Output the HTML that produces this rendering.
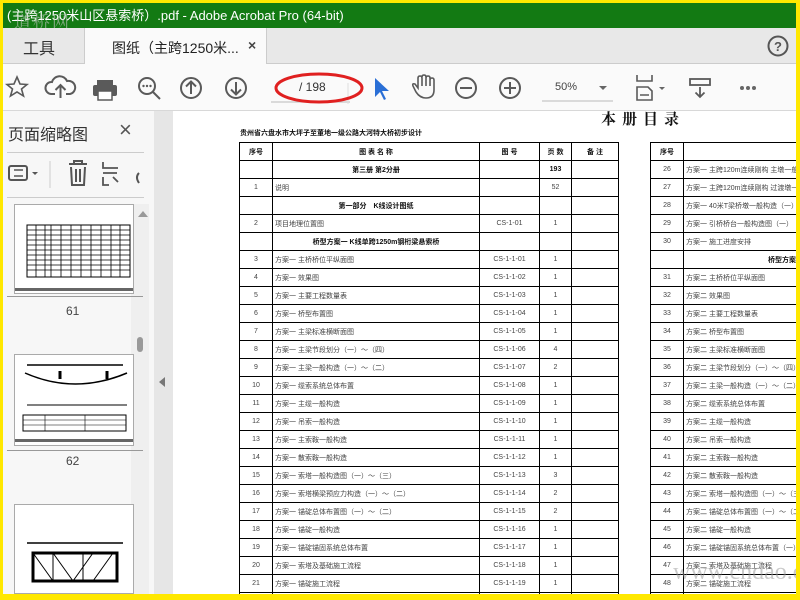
<!DOCTYPE html>
<html><head><meta charset="utf-8"><style>
*{margin:0;padding:0;box-sizing:border-box}
body{width:800px;height:600px;overflow:hidden;background:#ffe800;position:relative;font-family:"Liberation Sans","Noto Sans CJK SC",sans-serif}
.abs{position:absolute}
#title{left:3px;top:3px;width:793px;height:25px;background:#137a13;color:#fff;font-size:13px;line-height:25px;padding-left:4px;white-space:nowrap}
#tabs{left:3px;top:28px;width:793px;height:36px;background:#e8e8e8;border-bottom:1px solid #ccc}
#toolbar{left:3px;top:64px;width:793px;height:47px;background:#fafafa;border-bottom:1px solid #d8d8d8}
#side{left:3px;top:111px;width:151px;height:483px;background:#f7f7f7}
#strip{left:154px;top:111px;width:19px;height:483px;background:#e6e6e6}
#doc{left:173px;top:111px;width:623px;height:483px;background:#fff;overflow:hidden}
table{border-collapse:collapse;table-layout:fixed;position:absolute;font-size:7px;color:#444}
td{border:1px solid #000;height:18px;padding:0 2px;white-space:nowrap;overflow:hidden}
td.c{text-align:center}
.b td{font-weight:bold;color:#111}
svg{position:absolute}
</style></head><body>
<div id="title" class="abs">(主跨1250米山区悬索桥）.pdf - Adobe Acrobat Pro (64-bit)</div>
<div class="abs" style="left:14px;top:8px;font-size:17px;color:rgba(200,200,200,.6);font-family:'Noto Serif CJK SC',serif;letter-spacing:2px">道桥网</div>
<div id="tabs" class="abs">
 <div class="abs" style="left:20px;top:7px;font-size:16px;color:#333">工具</div>
 <div class="abs" style="left:81px;top:0;width:183px;height:37px;background:#fafafa;border-left:1px solid #ccc;border-right:1px solid #ccc"></div>
 <div class="abs" style="left:109px;top:10px;font-size:14px;color:#222">图纸（主跨1250米...</div>
 <div class="abs" style="left:245px;top:9px;font-size:14px;color:#444;font-weight:bold">×</div>
 <svg style="left:764px;top:7px" width="22" height="22"><circle cx="11" cy="11" r="9.5" fill="none" stroke="#555" stroke-width="2"/><text x="11" y="16" font-size="13" text-anchor="middle" font-weight="bold" fill="#555" font-family="Liberation Sans">?</text></svg>
</div>
<div id="toolbar" class="abs">
 <svg style="left:0;top:0" width="793" height="47" fill="none" stroke="#5a5a5a" stroke-width="2">
  <path d="M14 13 L17 20 L24 20.5 L18.5 25 L20.5 32 L14 28 L7.5 32 L9.5 25 L4 20.5 L11 20 Z" stroke-width="1.6"/>
  <path d="M52 30 H48 A6 6 0 0 1 49 18 A8 8 0 0 1 64 17 A6 6 0 0 1 67 30 H63 M57.5 34 V21 M52.5 26 L57.5 21 L62.5 26" stroke-width="2"/>
  <g fill="#5a5a5a" stroke="none"><rect x="94" y="16" width="16" height="6"/><rect x="90" y="21" width="24" height="11" rx="2"/><rect x="95" y="27" width="14" height="9" fill="#fff" stroke="#5a5a5a" stroke-width="1.5"/></g>
  <circle cx="144" cy="22" r="8"/><path d="M150 28 L157 35"/><g fill="#5a5a5a" stroke="none"><circle cx="140.5" cy="22" r="1.2"/><circle cx="144" cy="22" r="1.2"/><circle cx="147.5" cy="22" r="1.2"/></g>
  <circle cx="188" cy="24" r="10"/><path d="M188 30 V18 M183 22.5 L188 17.5 L193 22.5"/>
  <circle cx="233" cy="24" r="10"/><path d="M233 18 V30 M228 25.5 L233 30.5 L238 25.5"/>
  <path d="M268 38 H347" stroke="#bbb" stroke-width="1"/>
  <path d="M345 19 V40" stroke="#ddd" stroke-width="1"/>
  <ellipse cx="316" cy="24" rx="43" ry="14" stroke="#e02020" stroke-width="3"/>
  <path d="M372 14 L372 33 L377 28 L381 36 L383 35 L379 27 L386 27 Z" fill="#2a6fd6" stroke="none"/>
  <path d="M413 28 L410 22 Q409 19 412 20 L415 24 V14 Q415 12 417 12 Q419 12 419 14 V22 M419 13 Q419 11 421 11 Q423 11 423 13 V22 M423 14 Q423 12 425 12 Q427 12 427 14 V22 M427 16 Q427 14 429 14 Q431 14 431 16 V26 Q431 34 423 34 Q417 34 413 28" stroke-width="1.6"/>
  <circle cx="463" cy="24" r="10"/><path d="M457 24 H469"/>
  <circle cx="507" cy="24" r="10"/><path d="M501 24 H513 M507 18 V30"/>
  <path d="M539 37 H610" stroke="#bbb" stroke-width="1"/>
  <path d="M596 22 L604 22 L600 26 Z" fill="#666" stroke="none"/>
  <path d="M634 11 V17 H649 V11 M634 36 V23 H645 L649 27 V36 Z M637 31 H646" stroke-width="1.6"/>
  <path d="M656 23 L662 23 L659 26 Z" fill="#666" stroke="none"/>
  <rect x="687" y="15" width="20" height="6" stroke-width="1.8"/><path d="M697 23 V33 M692.5 28.5 L697 33 L701.5 28.5" stroke-width="1.8"/>
  <g fill="#666" stroke="none"><circle cx="739" cy="24" r="2"/><circle cx="745" cy="24" r="2"/><circle cx="751" cy="24" r="2"/></g>
 </svg>
 <div class="abs" style="left:296px;top:16px;font-size:12px;color:#333">/ 198</div>
 <div class="abs" style="left:552px;top:17px;font-size:11px;color:#444">50%</div>
</div>
<div id="side" class="abs">
 <div class="abs" style="left:5px;top:10px;font-size:16px;color:#333">页面缩略图</div>
 <div class="abs" style="left:116px;top:6px;font-size:22px;color:#555">×</div>
 <div class="abs" style="left:4px;top:41px;width:137px;height:1px;background:#ccc"></div>
 <svg style="left:0;top:44px" width="150" height="40" fill="none" stroke="#555" stroke-width="2">
  <rect x="6" y="11" width="18" height="14" rx="2"/><path d="M11 15 H20 M11 21 H20" stroke-width="1.5"/><path d="M29 17 L35 17 L32 20 Z" fill="#555" stroke="none"/>
  <path d="M47 6 V33" stroke="#ccc" stroke-width="1"/>
  <path d="M66 9 H84 M71 9 V6 H79 V9 M68 12 L69 30 H81 L82 12 M73 14 V27 M77 14 V27"/>
  <path d="M100 7 V13 H115 M100 18 H114 M100 22 V30 H106 M110 22 L115 27" stroke-width="1.8"/>
  <path d="M136 18 Q132 22 136 28" />
 </svg>
 <div class="abs" style="left:4px;top:86px;width:137px;height:1px;background:#ccc"></div>
 <div class="abs" style="left:128px;top:93px;width:18px;height:390px;background:#efefef"></div>
 <div class="abs" style="left:135px;top:100px;width:0;height:0;border:5px solid transparent;border-bottom:6px solid #999;border-top:0"></div>
 <div class="abs" style="left:134px;top:226px;width:6px;height:15px;border-radius:3px;background:#999"></div>
 <div class="abs" style="left:11px;top:93px;width:120px;height:90px;background:#fff;border:1px solid #aaa"></div>
 <svg style="left:12px;top:94px" width="118" height="88"><rect x="12" y="20" width="103" height="52" fill="none" stroke="#000"/><g stroke="#000" stroke-width=".8"><path d="M12 25H115M12 30H115M12 35H115M12 40H115M12 45H115M12 50H115M12 55H115M12 60H115M12 65H115M21 20V72M30 20V72M36 20V72M46 20V72M56 20V72M66 20V72M76 20V72M86 20V72M96 20V72M105 20V72"/></g><rect x="0" y="83" width="118" height="3" fill="#666"/></svg>
 <div class="abs" style="left:4px;top:185px;width:136px;height:1px;background:#999"></div>
 <div class="abs" style="left:63px;top:193px;font-size:12px;color:#444">61</div>
 <div class="abs" style="left:11px;top:243px;width:120px;height:92px;background:#fff;border:1px solid #aaa"></div>
 <svg style="left:12px;top:244px" width="118" height="90" stroke="#000" fill="none"><path d="M12 10H108M10 18Q60 40 112 18" stroke-width="1.5"/><path d="M45 16 L45 24 M92 16 L92 24" stroke-width="3"/><path d="M12 50H112" stroke-width="1"/><rect x="8" y="60" width="103" height="16"/><path d="M8 65H111M8 70H111M30 60V76M70 60V76" stroke-width=".6"/><rect x="0" y="84" width="118" height="3" fill="#666" stroke="none"/></svg>
 <div class="abs" style="left:4px;top:339px;width:136px;height:1px;background:#999"></div>
 <div class="abs" style="left:63px;top:343px;font-size:12px;color:#444">62</div>
 <div class="abs" style="left:11px;top:393px;width:120px;height:90px;background:#fff;border:1px solid #aaa"></div>
 <svg style="left:12px;top:394px" width="118" height="90" stroke="#000" fill="none"><path d="M12 38H108" stroke-width="1.5"/><rect x="18" y="48" width="84" height="28" stroke-width="3"/><path d="M38 48V76M68 48V76M18 48L38 76M38 48L58 76M78 48L58 76M98 48L78 76" stroke-width="1"/></svg>
</div>
<div id="strip" class="abs"><div class="abs" style="left:5px;top:266px;border:5px solid transparent;border-right:6px solid #777;border-left:0"></div></div>
<div id="doc" class="abs">
 <div class="abs" style="left:428px;top:-3px;font-size:15px;font-weight:bold;color:#111;letter-spacing:6px;font-family:'Noto Serif CJK SC',serif">本册目录</div>
 <div class="abs" style="left:67px;top:17px;font-size:7px;font-weight:bold;color:#111">贵州省六盘水市大坪子至董地一级公路大河特大桥初步设计</div>
 <table style="left:66px;top:31px;width:379px">
  <colgroup><col style="width:33px"><col style="width:207px"><col style="width:60px"><col style="width:32px"><col style="width:47px"></colgroup>
  <tr class="b"><td class="c">序号</td><td class="c">图 表 名 称</td><td class="c">图 号</td><td class="c">页 数</td><td class="c">备 注</td></tr>
  <tr class="b"><td></td><td class="c">第三册 第2分册</td><td></td><td class="c">193</td><td></td></tr>
  <tr><td class="c">1</td><td>说明</td><td></td><td class="c">52</td><td></td></tr>
  <tr class="b"><td></td><td class="c">第一部分　K线设计图纸</td><td></td><td></td><td></td></tr>
  <tr><td class="c">2</td><td>项目地理位置图</td><td class="c">CS-1-01</td><td class="c">1</td><td></td></tr>
  <tr class="b"><td></td><td class="c">桥型方案一 K线单跨1250m钢桁梁悬索桥</td><td></td><td></td><td></td></tr>
  <tr><td class="c">3</td><td>方案一 主桥桥位平纵面图</td><td class="c">CS-1-1-01</td><td class="c">1</td><td></td></tr>
  <tr><td class="c">4</td><td>方案一 效果图</td><td class="c">CS-1-1-02</td><td class="c">1</td><td></td></tr>
  <tr><td class="c">5</td><td>方案一 主要工程数量表</td><td class="c">CS-1-1-03</td><td class="c">1</td><td></td></tr>
  <tr><td class="c">6</td><td>方案一 桥型布置图</td><td class="c">CS-1-1-04</td><td class="c">1</td><td></td></tr>
  <tr><td class="c">7</td><td>方案一 主梁标准横断面图</td><td class="c">CS-1-1-05</td><td class="c">1</td><td></td></tr>
  <tr><td class="c">8</td><td>方案一 主梁节段划分（一）～（四）</td><td class="c">CS-1-1-06</td><td class="c">4</td><td></td></tr>
  <tr><td class="c">9</td><td>方案一 主梁一般构造（一）～（二）</td><td class="c">CS-1-1-07</td><td class="c">2</td><td></td></tr>
  <tr><td class="c">10</td><td>方案一 缆索系统总体布置</td><td class="c">CS-1-1-08</td><td class="c">1</td><td></td></tr>
  <tr><td class="c">11</td><td>方案一 主缆一般构造</td><td class="c">CS-1-1-09</td><td class="c">1</td><td></td></tr>
  <tr><td class="c">12</td><td>方案一 吊索一般构造</td><td class="c">CS-1-1-10</td><td class="c">1</td><td></td></tr>
  <tr><td class="c">13</td><td>方案一 主索鞍一般构造</td><td class="c">CS-1-1-11</td><td class="c">1</td><td></td></tr>
  <tr><td class="c">14</td><td>方案一 散索鞍一般构造</td><td class="c">CS-1-1-12</td><td class="c">1</td><td></td></tr>
  <tr><td class="c">15</td><td>方案一 索塔一般构造图（一）～（三）</td><td class="c">CS-1-1-13</td><td class="c">3</td><td></td></tr>
  <tr><td class="c">16</td><td>方案一 索塔横梁预应力构造（一）～（二）</td><td class="c">CS-1-1-14</td><td class="c">2</td><td></td></tr>
  <tr><td class="c">17</td><td>方案一 锚碇总体布置图（一）～（二）</td><td class="c">CS-1-1-15</td><td class="c">2</td><td></td></tr>
  <tr><td class="c">18</td><td>方案一 锚碇一般构造</td><td class="c">CS-1-1-16</td><td class="c">1</td><td></td></tr>
  <tr><td class="c">19</td><td>方案一 锚碇锚固系统总体布置</td><td class="c">CS-1-1-17</td><td class="c">1</td><td></td></tr>
  <tr><td class="c">20</td><td>方案一 索塔及基础施工流程</td><td class="c">CS-1-1-18</td><td class="c">1</td><td></td></tr>
  <tr><td class="c">21</td><td>方案一 锚碇施工流程</td><td class="c">CS-1-1-19</td><td class="c">1</td><td></td></tr>
  <tr><td></td><td></td><td></td><td></td><td></td></tr>
 </table>
 <table style="left:477px;top:31px;width:240px">
  <colgroup><col style="width:33px"><col style="width:207px"></colgroup>
  <tr class="b"><td class="c">序号</td><td class="c" style="padding-left:60px">图 表</td></tr>
  <tr><td class="c">26</td><td>方案一 主跨120m连续刚构 主墩一般构造</td></tr>
  <tr><td class="c">27</td><td>方案一 主跨120m连续刚构 过渡墩一般构造</td></tr>
  <tr><td class="c">28</td><td>方案一 40米T梁桥墩一般构造（一）</td></tr>
  <tr><td class="c">29</td><td>方案一 引桥桥台一般构造图（一）</td></tr>
  <tr><td class="c">30</td><td>方案一 施工进度安排</td></tr>
  <tr class="b"><td></td><td style="padding-left:84px">桥型方案二 K线单跨</td></tr>
  <tr><td class="c">31</td><td>方案二 主桥桥位平纵面图</td></tr>
  <tr><td class="c">32</td><td>方案二 效果图</td></tr>
  <tr><td class="c">33</td><td>方案二 主要工程数量表</td></tr>
  <tr><td class="c">34</td><td>方案二 桥型布置图</td></tr>
  <tr><td class="c">35</td><td>方案二 主梁标准横断面图</td></tr>
  <tr><td class="c">36</td><td>方案二 主梁节段划分（一）～（四）</td></tr>
  <tr><td class="c">37</td><td>方案二 主梁一般构造（一）～（二）</td></tr>
  <tr><td class="c">38</td><td>方案二 缆索系统总体布置</td></tr>
  <tr><td class="c">39</td><td>方案二 主缆一般构造</td></tr>
  <tr><td class="c">40</td><td>方案二 吊索一般构造</td></tr>
  <tr><td class="c">41</td><td>方案二 主索鞍一般构造</td></tr>
  <tr><td class="c">42</td><td>方案二 散索鞍一般构造</td></tr>
  <tr><td class="c">43</td><td>方案二 索塔一般构造图（一）～（三）</td></tr>
  <tr><td class="c">44</td><td>方案二 锚碇总体布置图（一）～（二）</td></tr>
  <tr><td class="c">45</td><td>方案二 锚碇一般构造</td></tr>
  <tr><td class="c">46</td><td>方案二 锚碇锚固系统总体布置（一）</td></tr>
  <tr><td class="c">47</td><td>方案二 索塔及基础施工流程</td></tr>
  <tr><td class="c">48</td><td>方案二 锚碇施工流程</td></tr>
  <tr><td></td><td></td></tr>
 </table>
 <div class="abs" style="left:500px;top:448px;font-size:24px;color:rgba(150,150,150,.5);font-family:'Liberation Serif',serif">www.cndao.com</div>
</div>
</body></html>
